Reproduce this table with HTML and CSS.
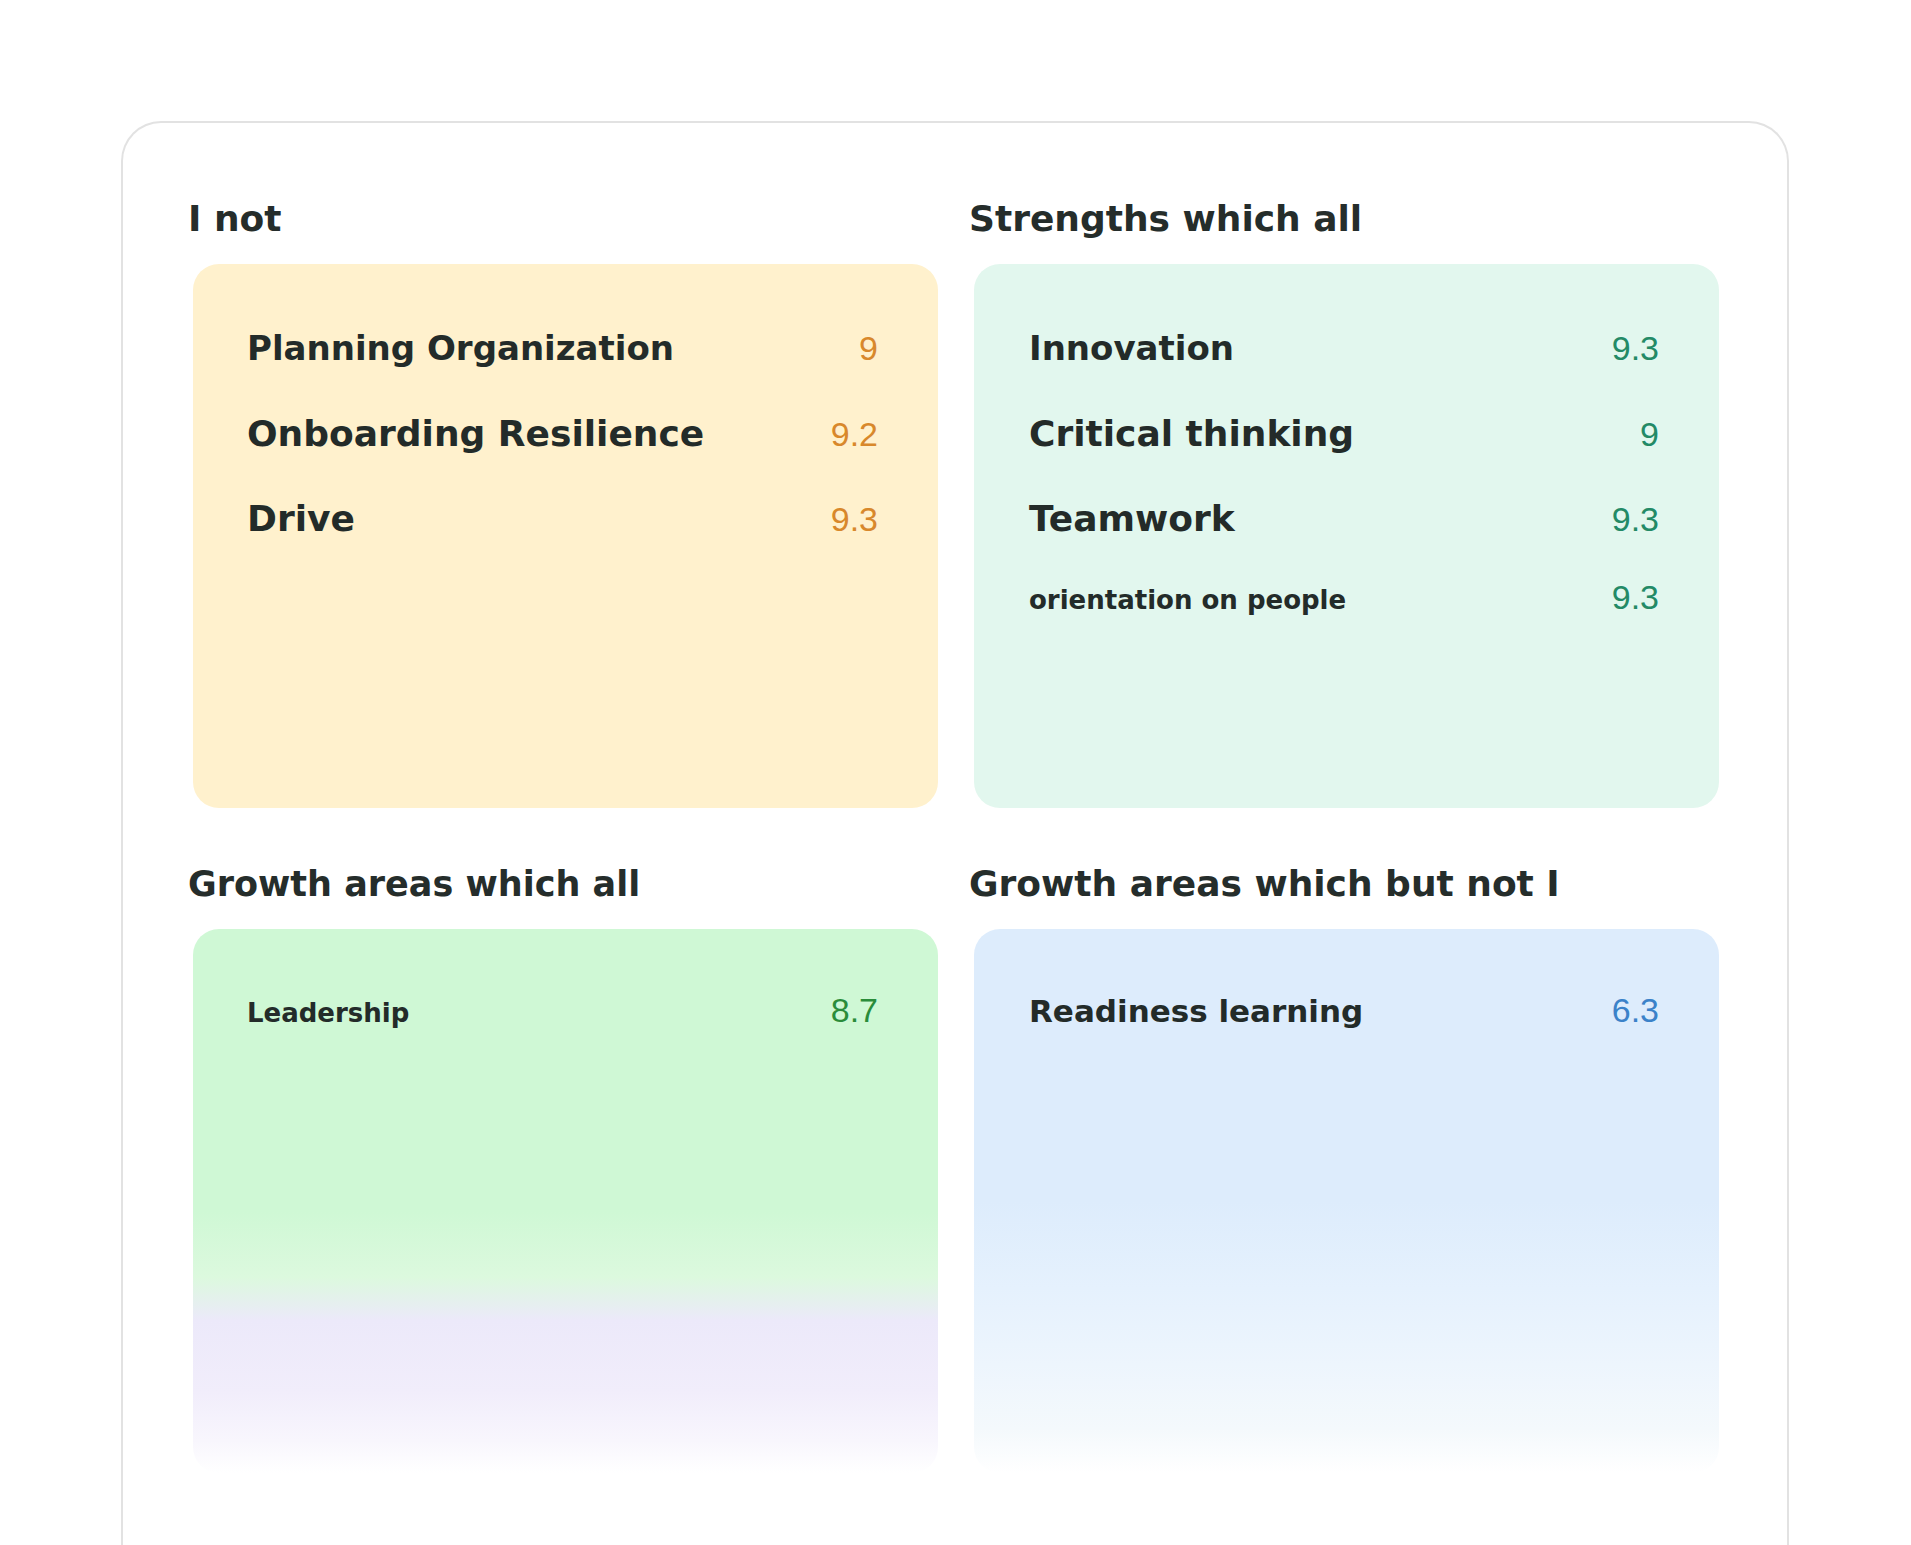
FILE: index.html
```html
<!DOCTYPE html>
<html lang="en">
<head>
<meta charset="utf-8">
<title>Strengths and growth areas</title>
<link rel="stylesheet" href="styles.css">
</head>
<body>
<main class="panel">
  <div class="grid">
    <section class="section">
      <h2 class="heading">I not</h2>
      <div class="card card-yellow">
        <div class="row"><span class="label label-34">Planning Organization</span><span class="score score-orange">9</span></div>
        <div class="row"><span class="label">Onboarding Resilience</span><span class="score score-orange">9.2</span></div>
        <div class="row"><span class="label">Drive</span><span class="score score-orange">9.3</span></div>
      </div>
    </section>
    <section class="section">
      <h2 class="heading">Strengths which all</h2>
      <div class="card card-mint">
        <div class="row"><span class="label label-34">Innovation</span><span class="score score-teal">9.3</span></div>
        <div class="row"><span class="label">Critical thinking</span><span class="score score-teal">9</span></div>
        <div class="row"><span class="label">Teamwork</span><span class="score score-teal">9.3</span></div>
        <div class="row row-small"><span class="label label-small">orientation on people</span><span class="score score-teal">9.3</span></div>
      </div>
    </section>
    <section class="section">
      <h2 class="heading heading-35">Growth areas which all</h2>
      <div class="card card-green card-bottom">
        <div class="row"><span class="label label-small">Leadership</span><span class="score score-green">8.7</span></div>
      </div>
    </section>
    <section class="section">
      <h2 class="heading">Growth areas which but not I</h2>
      <div class="card card-blue card-bottom">
        <div class="row"><span class="label label-mid">Readiness learning</span><span class="score score-blue">6.3</span></div>
      </div>
    </section>
  </div>
</main>
</body>
</html>
```

FILE: styles.css
```css
html, body {
  margin: 0;
  padding: 0;
  background: #ffffff;
}

body {
  font-family: "DejaVu Sans", "Noto Sans", sans-serif;
  color: #232b29;
  overflow: hidden;
}

.panel {
  margin: 121px 122px 0 121px;
  border: 2px solid #e2e2e2;
  border-bottom: none;
  border-radius: 40px 40px 0 0;
  padding: 75px 63px 120px 65px;
  min-height: 1400px;
}

.grid {
  display: grid;
  grid-template-columns: 1fr 1fr;
  column-gap: 26px;
  row-gap: 55px;
}

.section {
  display: flex;
  flex-direction: column;
}

.heading {
  margin: 0 0 24px 0;
  font-size: 36px;
  font-weight: bold;
  line-height: 42px;
  color: #252d2b;
}

.heading-35 {
  font-size: 35px;
}

.card {
  margin: 0 5px;
  height: 544px;
  box-sizing: border-box;
  border-radius: 26px;
  padding: 42px 60px 0 55px;
}

.card-yellow,
.card-green {
  padding-left: 54px;
}

.card-bottom {
  padding-top: 39px;
}

.card-yellow { background: #fff1cd; }
.card-mint { background: #e2f7ee; }
.card-green {
  background: linear-gradient(to bottom,
    #cff8d5 0%, #cff8d5 52%, #dcf9de 64%, #ece9fa 72%,
    #f1edfb 85%, #f8f6fd 94%, #ffffff 100%);
}
.card-blue {
  background: linear-gradient(to bottom,
    #ddecfc 0%, #ddecfc 50%, #e5f1fd 66%, #edf5fd 80%,
    #f4f9fc 92%, #ffffff 100%);
}

.row {
  display: flex;
  align-items: baseline;
  justify-content: space-between;
  height: 85px;
  line-height: 85px;
}

.row-small {
  height: 72px;
  line-height: 72px;
}

.label {
  font-size: 36px;
  font-weight: bold;
  color: #232b29;
}

.label-34 {
  font-size: 34px;
}

.label-small {
  font-size: 26px;
}

.label-mid {
  font-size: 31px;
}

.score {
  font-family: "Liberation Sans", Arial, sans-serif;
  font-size: 34px;
}

.score-orange { color: #d8882b; }
.score-teal { color: #238a66; }
.score-green { color: #2a8c3a; }
.score-blue { color: #3b82c9; }
```
